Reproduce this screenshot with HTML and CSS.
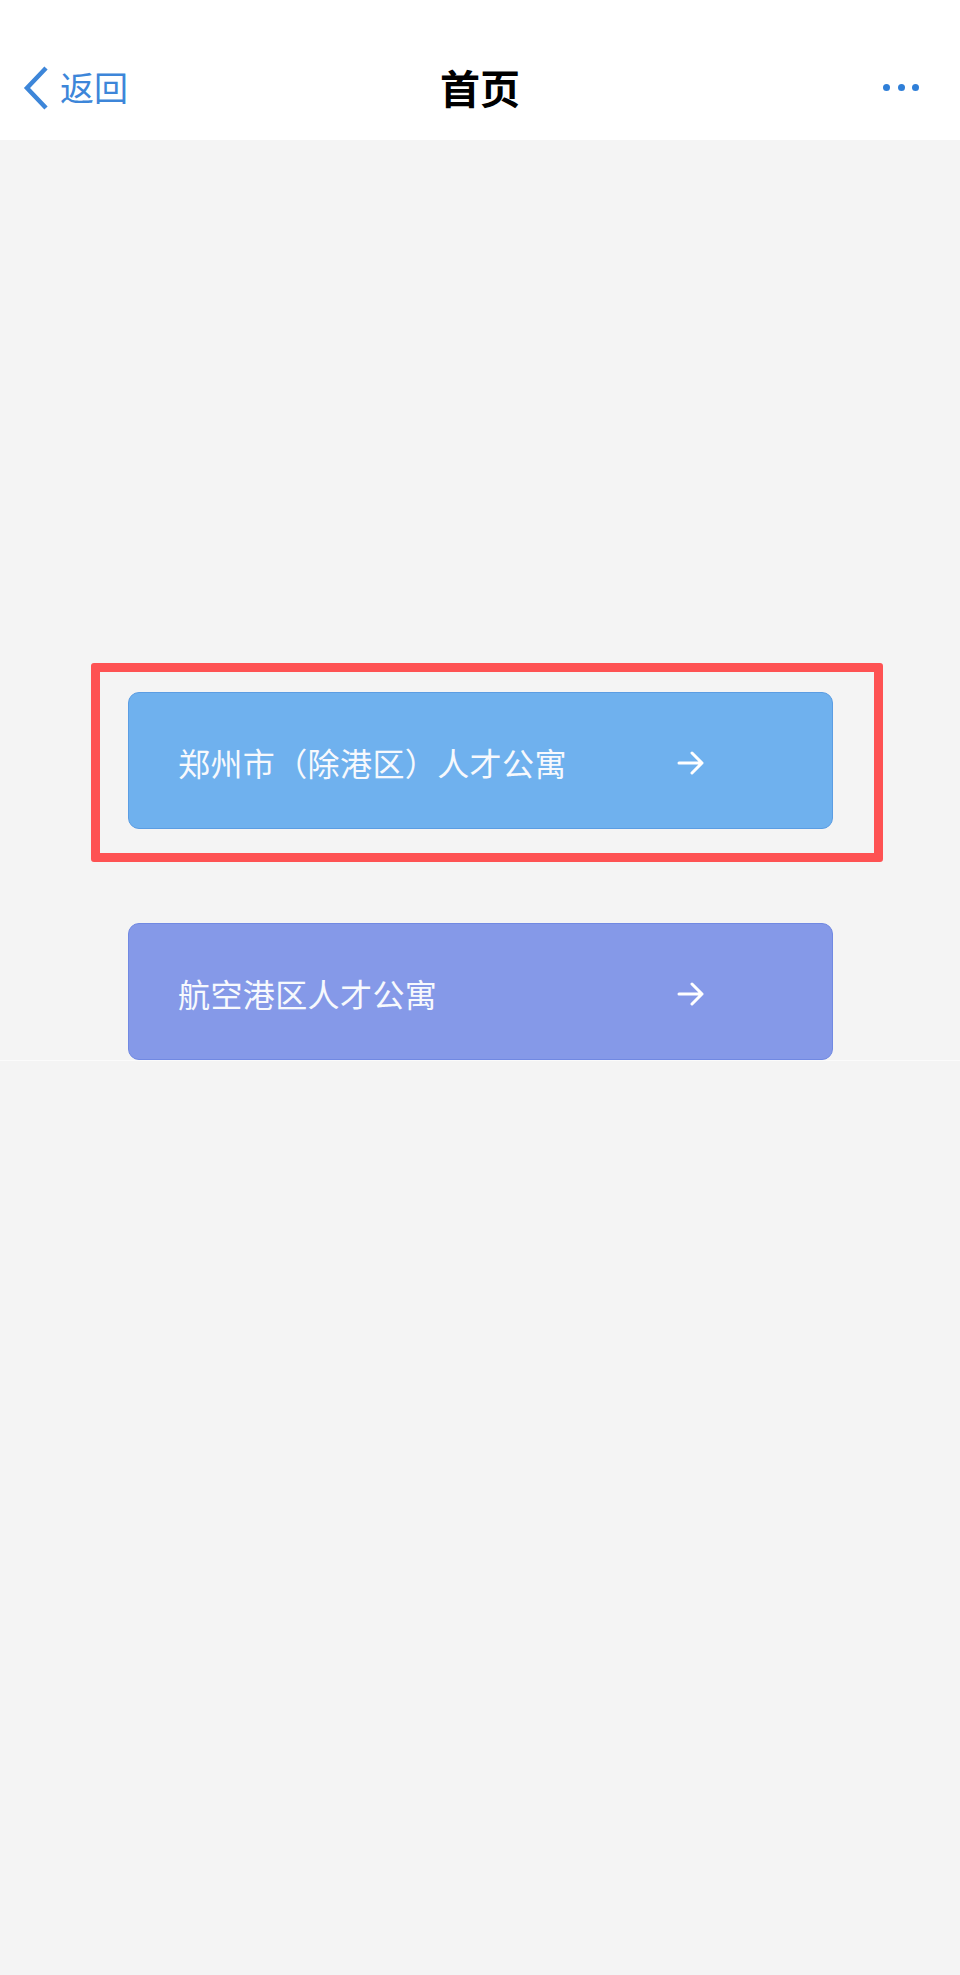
FILE: index.html
```html
<!DOCTYPE html>
<html lang="zh-CN">
<head>
<meta charset="utf-8">
<title>首页</title>
<link rel="stylesheet" href="styles.css">
</head>
<body>
<header class="navbar">
  <a class="nav-back">
    <svg class="chev" width="28" height="44" viewBox="0 0 28 44"><path d="M25 2 L6 22 L25 42" fill="none" stroke="#3d86d9" stroke-width="4.5" stroke-linejoin="miter"/></svg>
    <span>返回</span>
  </a>
  <h1 class="nav-title">首页</h1>
  <div class="nav-more"><i></i><i></i><i></i></div>
</header>
<main class="content">
  <div class="entry-list">
    <div class="highlight-wrap">
      <a class="entry entry-blue">
        <span class="entry-text">郑州市（除港区）人才公寓</span>
        <svg class="arrow" width="28" height="24" viewBox="0 0 28 24"><path d="M2 12 H25 M15 2 L25 12 L15 22" fill="none" stroke="#fff" stroke-width="3" stroke-linecap="round" stroke-linejoin="round"/></svg>
      </a>
      <div class="highlight-frame"></div>
    </div>
    <a class="entry entry-purple">
      <span class="entry-text">航空港区人才公寓</span>
      <svg class="arrow" width="28" height="24" viewBox="0 0 28 24"><path d="M2 12 H25 M15 2 L25 12 L15 22" fill="none" stroke="#fff" stroke-width="3" stroke-linecap="round" stroke-linejoin="round"/></svg>
    </a>
  </div>
</main>
</body>
</html>
```
FILE: styles.css
```css
html, body {
  margin: 0;
  padding: 0;
}
body {
  background: #f4f4f4;
  font-family: "Noto Sans CJK SC", "Noto Sans", sans-serif;
  width: 960px;
  min-height: 1975px;
}
.navbar {
  height: 140px;
  background: #ffffff;
  display: grid;
  grid-template-columns: 1fr auto 1fr;
  align-items: center;
  box-sizing: border-box;
  padding: 34px 0 0 0;
}
.nav-back {
  display: flex;
  align-items: center;
  padding-left: 21px;
  color: #3d86d9;
  font-size: 34px;
  line-height: 40px;
}
.nav-back .chev {
  margin-right: 11px;
  margin-top: 1px;
}
.nav-title {
  margin: 0;
  font-size: 40px;
  font-weight: 700;
  color: #000;
  line-height: 44px;
}
.nav-more {
  justify-self: end;
  display: flex;
  gap: 7.5px;
  padding-right: 41px;
  padding-top: 1px;
}
.nav-more i {
  width: 7px;
  height: 7px;
  border-radius: 50%;
  background: #2f7fd8;
}
.content {
  padding-top: 552px;
  border-bottom: 1px solid #fbfbfb;
  padding-bottom: 0;
}
.entry-list {
  display: flex;
  flex-direction: column;
  gap: 94px;
  padding-left: 128px;
}
.highlight-wrap {
  position: relative;
  width: 705px;
}
.entry {
  box-sizing: border-box;
  width: 705px;
  height: 137px;
  border-radius: 11px;
  display: flex;
  align-items: center;
  padding-left: 49px;
  color: #ffffff;
}
.entry-blue {
  background: #6fb1ee;
  border: 1.5px solid #5b9de3;
}
.entry-purple {
  background: #8599e8;
  border: 1.5px solid #7189e2;
}
.entry-text {
  font-size: 32px;
  letter-spacing: 0.4px;
  width: 499px;
  line-height: 40px;
  margin-top: 2px;
  color: #f7f9fd;
}
.arrow {
  margin-top: 4px;
}
.highlight-frame {
  position: absolute;
  left: -37px;
  top: -29px;
  width: 792px;
  height: 199px;
  box-sizing: border-box;
  border: 9px solid #fe5253;
  border-radius: 3px;
}
```
